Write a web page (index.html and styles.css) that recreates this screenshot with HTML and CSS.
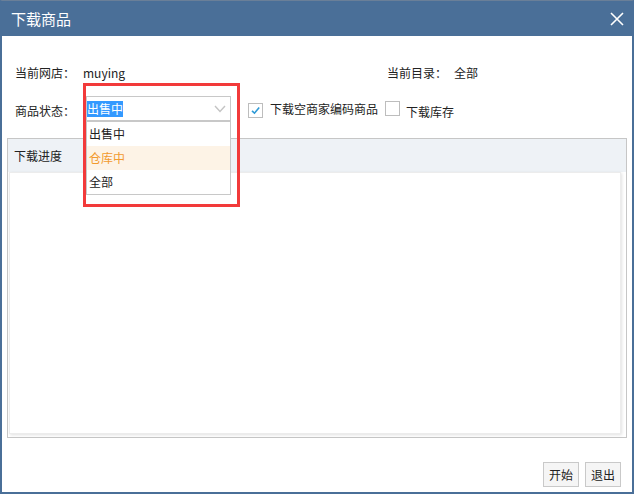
FILE: index.html
```html
<!DOCTYPE html>
<html lang="zh-CN">
<head>
  <meta charset="UTF-8" />
  <title>下载商品</title>
  <link rel="stylesheet" href="styles.css">
</head>
<body>
  <div class="dialog">
    <div class="titlebar">
      <span class="title">下载商品</span>
      <svg class="close" width="14" height="14" viewBox="0 0 14 14">
        <path d="M1 1 L13 13 M13 1 L1 13" stroke="#fff" stroke-width="1.6" fill="none" />
      </svg>
    </div>

    <div class="content">
      <!-- shop / category -->
      <div class="row row-info">
        <div class="field field-shop">
          <span class="label">当前网店：</span>
          <span class="value">muying</span>
        </div>
        <div class="field">
          <span class="label label-dir">当前目录：</span>
          <span class="value">全部</span>
        </div>
      </div>

      <!-- status + options -->
      <div class="row row-opts">
        <span class="label label-status">商品状态：</span>
        <div class="select">
          <span class="select-text"><span class="sel">出售中</span></span>
          <svg class="chevron" width="12" height="8" viewBox="0 0 12 8">
            <path d="M1 1 L6 6.5 L11 1" stroke="#c4c4c4" stroke-width="1.4" fill="none" />
          </svg>
          <ul class="options">
            <li>出售中</li>
            <li class="hover">仓库中</li>
            <li>全部</li>
          </ul>
          <div class="mark"></div>
        </div>
        <label class="check">
          <span class="box">
            <svg width="13" height="13" viewBox="0 0 13 13">
              <path d="M3 6.8 L5.5 9.2 L10.2 3.6" stroke="#2e9ad6" stroke-width="1.6" fill="none" />
            </svg>
          </span>
          <span>下载空商家编码商品</span>
        </label>
        <label class="check check-stock">
          <span class="box"></span>
          <span class="check-label">下载库存</span>
        </label>
      </div>

      <!-- progress -->
      <div class="panel">
        <div class="panel-head">下载进度</div>
        <div class="panel-body">
          <div class="log"></div>
        </div>
      </div>

      <div class="footer">
        <button class="btn">开始</button>
        <button class="btn">退出</button>
      </div>
    </div>
  </div>
</body>
</html>
```

FILE: styles.css
```css
* { box-sizing: border-box; }

html, body {
  margin: 0;
  padding: 0;
  background: #5f7590;
  font-family: "Noto Sans CJK SC", "Liberation Sans", sans-serif;
  font-size: 12px;
  color: #222;
}

.dialog {
  width: 634px;
  height: 494px;
  border: 2px solid #4a6f98;
  border-top: 1px solid #6a7f98;
  background: #fff;
  display: flex;
  flex-direction: column;
}

.titlebar {
  height: 35px;
  margin: 0 -2px;
  padding: 0 10px 0 11px;
  background: #4a6f98;
  display: flex;
  align-items: center;
  justify-content: space-between;
  flex-shrink: 0;
}

.title {
  color: #fff;
  font-size: 15px;
  line-height: 20px;
  margin-top: 1px;
}

.close { margin-top: 1px; }

.content {
  flex: 1;
  padding-top: 27px;
  display: flex;
  flex-direction: column;
}

.row {
  display: flex;
  align-items: center;
  padding-left: 13px;
}

.row-info { height: 20px; }

.field {
  display: flex;
  line-height: 20px;
  flex-shrink: 0;
}

.field-shop { width: 372px; }

.label { width: 68px; flex-shrink: 0; }
.label-dir { width: 67px; }

.row-opts {
  height: 25px;
  margin-top: 13px;
}

.label-status {
  width: 71px;
  margin-top: 3px;
}

/* select */
.select {
  position: relative;
  width: 145px;
  height: 25px;
  border: 1px solid #c8c8c8;
  display: flex;
  align-items: center;
  justify-content: space-between;
  padding: 0 4px 0 0;
  margin-right: 17px;
  flex-shrink: 0;
}

.select-text { line-height: 16px; }

.sel {
  display: inline-block;
  background: #3399ff;
  color: #fff;
  line-height: 16px;
}

.chevron { margin-top: 1px; }

.options {
  position: absolute;
  top: 24px;
  left: -1px;
  width: 145px;
  margin: 0;
  padding: 0;
  list-style: none;
  background: #fff;
  border: 1px solid #c8c8c8;
  z-index: 2;
}

.options li {
  height: 24px;
  line-height: 24px;
  padding-left: 2px;
}

.options li.hover {
  background: #fdf3e6;
  color: #f29a2e;
}

.mark {
  position: absolute;
  left: -4px;
  top: -14px;
  width: 157px;
  height: 124px;
  border: 3px solid #f23a3a;
  z-index: 3;
  pointer-events: none;
}

/* checkboxes */
.check {
  display: flex;
  align-items: center;
  gap: 7px;
  margin-right: 7px;
  flex-shrink: 0;
}

.box {
  width: 15px;
  height: 15px;
  border: 1px solid #bdbdbd;
  display: flex;
  align-items: center;
  justify-content: center;
  background: #fff;
}

.check .box { margin-top: 3px; }
.check-stock { gap: 6px; }
.check-stock .box { margin-top: 0; }
.check-label { margin-top: 6px; }

/* progress panel */
.panel {
  margin: 17px 5px 0;
  height: 300px;
  border: 1px solid #c6c6c6;
  display: flex;
  flex-direction: column;
}

.panel-head {
  height: 33px;
  line-height: 33px;
  padding-left: 6px;
  background: #eef2f6;
  flex-shrink: 0;
}

.panel-body {
  flex: 1;
  padding: 0 5px 3px 1px;
}

.log {
  height: 100%;
  border: 1px solid #ececec;
  box-shadow: 1px 1px 3px rgba(0, 0, 0, 0.12);
  background: #fff;
}

.footer {
  display: flex;
  justify-content: flex-end;
  gap: 6px;
  margin-top: 24px;
  padding-right: 11px;
}

.btn {
  width: 36px;
  height: 25px;
  padding: 0;
  border: 1px solid #c9c9c9;
  background: #f5f5f5;
  font-family: inherit;
  font-size: 12px;
  color: #222;
}
```
